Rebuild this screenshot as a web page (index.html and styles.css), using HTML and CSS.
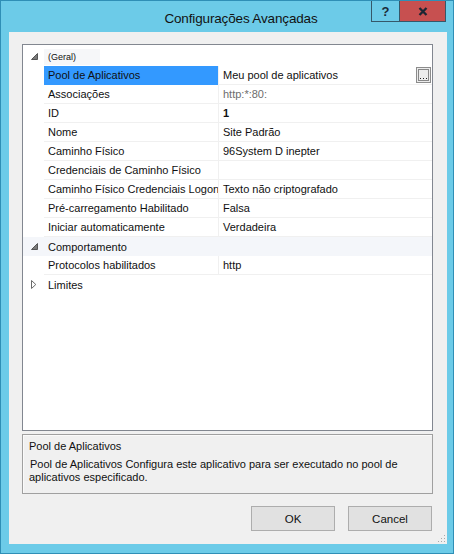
FILE: index.html
```html
<!DOCTYPE html>
<html lang="pt">
<head>
<meta charset="utf-8">
<title>Configurações Avançadas</title>
<link rel="stylesheet" href="styles.css">
</head>
<body>
<div class="window">
  <div class="titlebar">
    <div class="title">Configurações Avançadas</div>
    <div class="caption">
      <div class="cbtn help">?</div>
      <div class="cbtn close">
        <svg width="10" height="9" viewBox="0 0 10 9"><path d="M1.5 1 L8.5 8 M8.5 1 L1.5 8" stroke="#1c2633" stroke-width="2.3" fill="none"/></svg>
      </div>
    </div>
  </div>
  <div class="client">
    <div class="grid">
      <div class="cat geral">
        <span class="glyph"><svg width="7" height="7" viewBox="0 0 7 7"><polygon points="0.5,6.5 6.5,0.5 6.5,6.5" fill="#7a7a7a" stroke="#555" stroke-width="1"/></svg></span>
        <span class="catname"><span class="geral-label">(Geral)</span></span>
      </div>
      <div class="row selected">
        <span class="margin"></span>
        <span class="name">Pool de Aplicativos</span>
        <span class="value">Meu pool de aplicativos
          <svg class="ellipsis" width="15" height="16" viewBox="0 0 15 16"><rect x="0.5" y="0.5" width="14" height="15" fill="#ececec" stroke="#8c8c8c"/><rect x="2.5" y="2.5" width="10" height="11" fill="none" stroke="#222" stroke-dasharray="1 1"/><rect x="4" y="11" width="1" height="1" fill="#222"/><rect x="7" y="11" width="1" height="1" fill="#222"/><rect x="10" y="11" width="1" height="1" fill="#222"/></svg>
        </span>
      </div>
      <div class="row">
        <span class="margin"></span>
        <span class="name">Associações</span>
        <span class="value muted">http:*:80:</span>
      </div>
      <div class="row">
        <span class="margin"></span>
        <span class="name">ID</span>
        <span class="value bold">1</span>
      </div>
      <div class="row">
        <span class="margin"></span>
        <span class="name">Nome</span>
        <span class="value">Site Padrão</span>
      </div>
      <div class="row">
        <span class="margin"></span>
        <span class="name">Caminho Físico</span>
        <span class="value">96System D inepter</span>
      </div>
      <div class="row">
        <span class="margin"></span>
        <span class="name">Credenciais de Caminho Físico</span>
        <span class="value"></span>
      </div>
      <div class="row">
        <span class="margin"></span>
        <span class="name">Caminho Físico Credenciais Logon</span>
        <span class="value">Texto não criptografado</span>
      </div>
      <div class="row">
        <span class="margin"></span>
        <span class="name">Pré-carregamento Habilitado</span>
        <span class="value">Falsa</span>
      </div>
      <div class="row">
        <span class="margin"></span>
        <span class="name">Iniciar automaticamente</span>
        <span class="value">Verdadeira</span>
      </div>
      <div class="cat band">
        <span class="glyph"><svg width="7" height="7" viewBox="0 0 7 7"><polygon points="0.5,6.5 6.5,0.5 6.5,6.5" fill="#7a7a7a" stroke="#555" stroke-width="1"/></svg></span>
        <span class="catname">Comportamento</span>
      </div>
      <div class="row">
        <span class="margin"></span>
        <span class="name">Protocolos habilitados</span>
        <span class="value">http</span>
      </div>
      <div class="cat">
        <span class="glyph"><svg width="6" height="9" viewBox="0 0 6 9"><polygon points="0.5,0.5 4.8,4.5 0.5,8.5" fill="#fff" stroke="#6a6a6a" stroke-width="1"/></svg></span>
        <span class="catname line">Limites</span>
      </div>
    </div>
    <div class="desc">
      <div class="desc-title">Pool de Aplicativos</div>
      <div class="desc-body">Pool de Aplicativos Configura este aplicativo para ser executado no pool de<br>aplicativos especificado.</div>
    </div>
    <div class="buttons">
      <div class="btn">OK</div>
      <div class="btn">Cancel</div>
    </div>
    <svg class="grip" width="9" height="9" viewBox="0 0 9 9">
      <rect x="7" y="1" width="1" height="1" fill="#a8a8a8"/>
      <rect x="4" y="4" width="1" height="1" fill="#a8a8a8"/>
      <rect x="7" y="4" width="1" height="1" fill="#a8a8a8"/>
      <rect x="1" y="7" width="1" height="1" fill="#a8a8a8"/>
      <rect x="4" y="7" width="1" height="1" fill="#a8a8a8"/>
      <rect x="7" y="7" width="1" height="1" fill="#a8a8a8"/>
    </svg>
  </div>
</div>
</body>
</html>
```
FILE: styles.css
```css
html, body {
  margin: 0;
  padding: 0;
}
body {
  width: 454px;
  height: 554px;
  overflow: hidden;
  font-family: "Liberation Sans", Arial, sans-serif;
  color: #000;
}
.window {
  box-sizing: border-box;
  width: 454px;
  height: 554px;
  border: 1px solid #2f8fb6;
  background: #6ccbe8;
  display: flex;
  flex-direction: column;
}
.titlebar {
  flex: none;
  height: 31px;
  display: flex;
  align-items: flex-start;
}
.title {
  flex: 1;
  padding-left: 110px;
  padding-top: 10px;
  text-align: center;
  font-size: 13.5px;
  letter-spacing: -0.15px;
  line-height: 16px;
  color: #121212;
  white-space: nowrap;
}
.caption {
  display: flex;
  margin-right: 7px;
}
.cbtn {
  height: 20px;
  border-bottom: 1px solid #35586a;
  border-left: 1px solid #35586a;
  display: flex;
  align-items: center;
  justify-content: center;
}
.help {
  width: 27px;
  font-weight: bold;
  font-size: 13px;
  color: #1b2a3a;
}
.close {
  width: 45px;
  background: #c75050;
  border-right: 1px solid #35586a;
}
.client {
  flex: 1;
  position: relative;
  margin: 0 6px 9px 8px;
  padding: 12px 14px 0 13px;
  background: #f0f0f0;
  display: flex;
  flex-direction: column;
}
.grid {
  box-sizing: border-box;
  height: 387px;
  border: 1px solid #828790;
  background: #fff;
  padding-top: 2px;
  font-size: 11px;
}
.row {
  display: grid;
  grid-template-columns: 21px 174px 1fr;
  height: 19px;
}
.name,
.value {
  box-sizing: border-box;
  height: 19px;
  line-height: 18px;
  white-space: nowrap;
  border-bottom: 1px solid #f0f0f0;
  color: #101010;
}
.name {
  padding-left: 4px;
}
.value {
  border-left: 1px solid #f0f0f0;
  padding-left: 4px;
  display: flex;
  justify-content: space-between;
  align-items: center;
}
.selected .name {
  background: #3399ff;
  border-bottom-color: #3399ff;
}
.ellipsis {
  margin-right: 1px;
  flex: none;
}
.muted {
  color: #6d6d6d;
}
.bold {
  font-weight: bold;
}
.cat {
  display: grid;
  grid-template-columns: 21px 1fr;
  height: 19px;
  align-items: center;
}
.glyph {
  display: flex;
  justify-content: center;
  align-items: center;
  height: 19px;
  padding-left: 1px;
}
.catname {
  padding-left: 4px;
  line-height: 18px;
  color: #101010;
}
.geral .catname {
  padding-left: 0;
  display: flex;
  align-items: center;
}
.geral-label {
  display: inline-block;
  height: 16px;
  line-height: 16px;
  padding: 0 24px 0 4px;
  font-size: 9px;
  background: #f6f7f9;
}
.band {
  background: #f4f6fa;
}
.desc {
  box-sizing: border-box;
  margin-top: 3px;
  height: 60px;
  border: 1px solid #a0a0a0;
  box-shadow: inset 1px 1px 0 #fafafa;
  padding: 4px 6px;
  font-size: 11px;
  color: #111;
}
.desc-title {
  line-height: 14px;
  margin-bottom: 5px;
}
.desc-body {
  line-height: 13px;
  text-indent: 1px;
}
.buttons {
  margin-top: 12px;
  display: flex;
  justify-content: flex-end;
  gap: 13px;
  padding-right: 1px;
}
.btn {
  box-sizing: border-box;
  width: 84px;
  height: 25px;
  border: 1px solid #adadad;
  background: #e1e1e1;
  font-size: 11.5px;
  color: #111;
  display: flex;
  align-items: center;
  justify-content: center;
}
.grip {
  position: absolute;
  right: 1px;
  bottom: 1px;
}
```
